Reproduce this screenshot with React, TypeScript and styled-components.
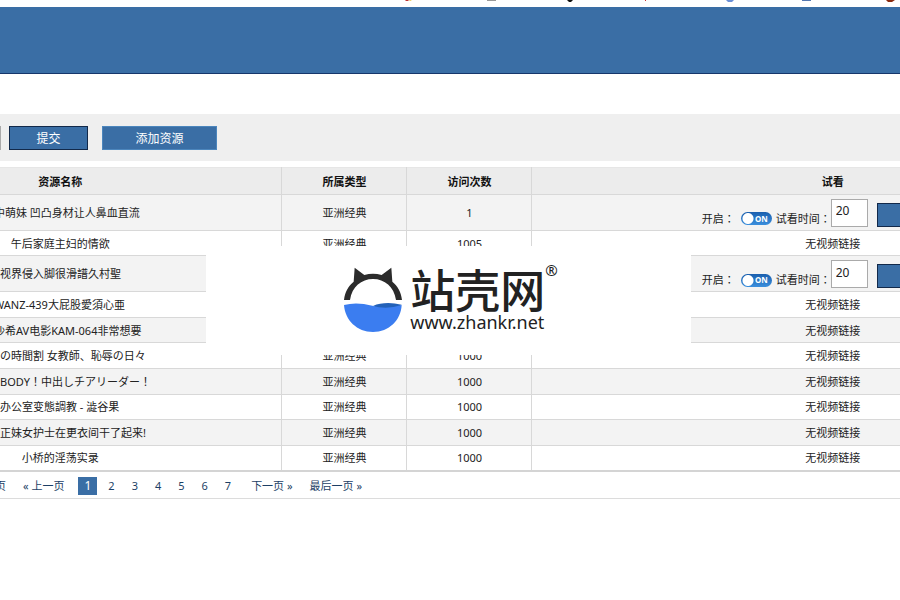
import React from "react";
import styled, { createGlobalStyle } from "styled-components";

const GlobalStyle = createGlobalStyle`
  *, *::before, *::after { box-sizing: border-box; }
  body {
    margin: 0;
    background: #fff;
    color: #222;
    font: 11px/16px "Noto Sans", "Noto Sans CJK SC", sans-serif;
  }
  input, button { font-family: inherit; }
`;

const BLUE = "#3a6ea5";

const Page = styled.div`
  overflow: hidden;
`;

const IconStrip = styled.svg`
  display: block;
  height: 7px;
`;

const Banner = styled.header`
  height: 67px;
  background: ${BLUE};
  border-bottom: 1px solid #16366b;
  margin-bottom: 40px;
`;

const Content = styled.main`
  position: relative;
  margin-left: -160px;
  width: calc(100% + 392px);
`;

const Toolbar = styled.form`
  display: flex;
  align-items: center;
  height: 47px;
  margin-bottom: 6px;
  background: #efefef;
`;

const SearchInput = styled.input`
  width: 161px;
  height: 24px;
  margin-right: 8px;
  background: #fff;
  border: 1px solid #aaa;
`;

const Button = styled.button<{ $wide?: boolean; $outlined?: boolean }>`
  flex: none;
  width: ${(p) => (p.$wide ? 115 : 79)}px;
  height: 24px;
  padding: 2px 0 0;
  color: #fff;
  font-size: 12px;
  line-height: 16px;
  background: ${BLUE};
  border: 1px solid ${(p) => (p.$outlined ? "#12294a" : "#4c86bd")};
  & + & { margin-left: 14px; }
`;

const Table = styled.table`
  width: 100%;
  height: 305px;
  table-layout: fixed;
  border-collapse: collapse;
  border-top: 1px solid #e6e6e6;
  border-bottom: 2px solid #d4d4d4;
`;

const NameCol = styled.col`
  width: 441px;
`;

const DataCol = styled.col`
  width: 125px;
`;

const HeadCell = styled.th`
  height: 27px;
  padding: 2px 0 0;
  color: #111;
  font-weight: 600;
  background: #ececec;
  border-bottom: 1px solid #d8d8d8;
  & + & { border-left: 1px solid #d8d8d8; padding-left: 2px; }
`;

const Row = styled.tr<{ $tall?: boolean }>`
  height: ${(p) => (p.$tall ? 35 : 25)}px;
  &:nth-child(odd) { background: #f3f3f3; }
`;

const Cell = styled.td`
  padding: 1px 0 0;
  text-align: center;
  white-space: nowrap;
  border-bottom: 1px solid #d8d8d8;
  & + & { border-left: 1px solid #d8d8d8; padding-left: 2px; }
`;

type NameAlign = "center" | "edge" | "cut";

const NameCell = styled(Cell)<{ $align: NameAlign }>`
  text-align: ${(p) => (p.$align === "center" ? "center" : "left")};
  padding-left: ${(p) => ({ center: 0, edge: 160, cut: 154 })[p.$align]}px;
  &:lang(ja) { font-family: "Noto Sans", "Noto Sans CJK JP", sans-serif; }
`;

const Preview = styled.div`
  display: flex;
  justify-content: center;
  align-items: flex-end;
  height: 28px;
  padding-right: 8px;
  font-family: "Noto Sans", "Noto Sans CJK TC", sans-serif;
`;

const Switch = styled.label`
  display: flex;
  align-items: center;
  height: 16px;
  margin-right: 4px;
`;

const SwitchInput = styled.input`
  appearance: none;
  margin: 0;
  width: 0;
  height: 0;
`;

const Track = styled.span`
  display: flex;
  align-items: center;
  justify-content: flex-end;
  width: 31px;
  height: 13px;
  margin-left: 6px;
  padding-right: 4px;
  color: #fff;
  font-size: 8px;
  font-weight: 700;
  line-height: 12px;
  border-radius: 7px;
  background: radial-gradient(circle at 7px 50%, #fff 5px, transparent 6px),
    linear-gradient(#1a5fae, #3b8fdd);
`;

const Time = styled.label`
  display: flex;
  align-items: flex-end;
`;

const TimeInput = styled.input`
  width: 37px;
  height: 28px;
  margin-right: 9px;
  padding: 0 4px 4px;
  color: #222;
  font-size: 12px;
  background: #fff;
  border: 1px solid #aaa;
`;

const Pagination = styled.nav`
  display: flex;
  align-items: center;
  gap: 5px;
  height: 27px;
  padding: 1px 0 0 149px;
  border-bottom: 1px solid #dcdcdc;
`;

const PageLink = styled.a<{ $current?: boolean }>`
  padding: 1px 6px;
  color: ${(p) => (p.$current ? "#fff" : "#1c3f66")};
  background: ${(p) => (p.$current ? BLUE : "transparent")};
  font-size: ${(p) => (p.$current ? 12 : 11)}px;
  text-decoration: none;
  white-space: nowrap;
`;

const PageSteps = styled.span`
  display: flex;
  gap: 5px;
  padding: 0 3px;
`;

const Watermark = styled.aside`
  position: absolute;
  top: 132px;
  left: 366px;
  display: flex;
  justify-content: center;
  width: 485px;
  height: 109px;
  padding: 20px 0 0 4px;
  background: #fff;
  color: #222;
`;

const LogoMark = styled.svg`
  width: 60px;
  height: 68px;
  margin-right: 7px;
`;

const LogoText = styled.div`
  display: flex;
  flex-direction: column;
`;

const LogoName = styled.div`
  font: 500 45px/46px "Noto Sans CJK SC", sans-serif;
`;

const LogoUrl = styled.div`
  font-size: 18px;
  line-height: 20px;
`;

const Registered = styled.sup`
  font-size: 15px;
  line-height: 8px;
  vertical-align: top;
`;

type Resource = { name: string; align: NameAlign; visits: string; preview?: boolean; lang?: string };

const resources: Resource[] = [
  { name: "中萌妹 凹凸身材让人鼻血直流", align: "cut", visits: "1", preview: true },
  { name: "午后家庭主妇的情欲", align: "center", visits: "1005" },
  { name: "视界侵入脚很滑譜久村聖", align: "edge", visits: "1000", preview: true },
  { name: "WANZ-439大屁股愛須心亜", align: "cut", visits: "1000" },
  { name: "沙希AV电影KAM-064非常想要", align: "cut", visits: "1000" },
  { name: "の時間割 女教師、恥辱の日々", align: "edge", visits: "1000", lang: "ja" },
  { name: "BODY！中出しチアリーダー！", align: "edge", visits: "1000", lang: "ja" },
  { name: "办公室变態調教 - 澁谷果", align: "edge", visits: "1000" },
  { name: "正妹女护士在更衣间干了起来!", align: "edge", visits: "1000" },
  { name: "小桥的淫荡实录", align: "center", visits: "1000" },
];

const pages = ["1", "2", "3", "4", "5", "6", "7"];

function PreviewControls() {
  return (
    <Preview>
      <Switch>
        开启：
        <SwitchInput type="checkbox" defaultChecked />
        <Track>ON</Track>
      </Switch>
      <Time>
        试看时间：
        <TimeInput type="text" defaultValue="20" />
      </Time>
      <Button type="button" $outlined aria-label="提交" />
    </Preview>
  );
}

function Logo() {
  return (
    <Watermark>
      <LogoMark viewBox="40 48 180 204" aria-hidden="true">
        <path
          d="M43 150C46 125 56 108 72 95L75 53L104 75Q130 67 156 75L185 53L188 95C204 108 214 125 217 150H199C193 110 165 87 130 87C95 87 67 110 61 150Z"
          fill="#2b2b2b"
        />
        <path d="M130 168Q165 153 216 164L200 176H145Z" fill="#2361b8" />
        <path d="M43 165Q80 155 128 167Q170 180 216 165C214 210 178 246 130 246C82 246 46 210 43 165Z" fill="#3b7df0" />
      </LogoMark>
      <LogoText>
        <LogoName>站壳网</LogoName>
        <LogoUrl>www.zhankr.net</LogoUrl>
      </LogoText>
      <Registered>®</Registered>
    </Watermark>
  );
}

export default function App() {
  return (
    <Page>
      <GlobalStyle />
      <IconStrip width="900" height="7" aria-hidden="true">
        <path d="M405 0h4l-1 1h-2z" fill="#b33" />
        <path d="M409 0h3l-2 1z" fill="#e8c040" />
        <path d="M487 0h9v1h-9z" fill="#999" />
        <path d="M567 0h6l-2 2h-2z" fill="#111" />
        <path d="M645 0h1v1h-1z" fill="#c33" />
        <path d="M726 0h8l-2 2h-4z" fill="#6b8fd6" />
        <path d="M802 0h9v1h-9z" fill="#5577b0" />
        <path d="M886 0h9l-3 2h-4z" fill="#8a2a10" />
      </IconStrip>
      <Banner />
      <Content>
        <Toolbar>
          <SearchInput type="text" aria-label="搜索" />
          <Button type="button" $outlined>提交</Button>
          <Button type="button" $wide>添加资源</Button>
        </Toolbar>
        <Table>
          <colgroup>
            <NameCol />
            <DataCol />
            <DataCol />
            <col />
          </colgroup>
          <thead>
            <tr>
              <HeadCell>资源名称</HeadCell>
              <HeadCell>所属类型</HeadCell>
              <HeadCell>访问次数</HeadCell>
              <HeadCell>试看</HeadCell>
            </tr>
          </thead>
          <tbody>
            {resources.map((r) => (
              <Row key={r.name} $tall={r.preview}>
                <NameCell $align={r.align} lang={r.lang}>{r.name}</NameCell>
                <Cell>亚洲经典</Cell>
                <Cell>{r.visits}</Cell>
                <Cell>{r.preview ? <PreviewControls /> : "无视频链接"}</Cell>
              </Row>
            ))}
          </tbody>
        </Table>
        <Pagination aria-label="分页">
          <PageLink href="#">页</PageLink>
          <PageLink href="#">« 上一页</PageLink>
          <PageSteps>
            {pages.map((p) => (
              <PageLink key={p} href="#" $current={p === "1"}>{p}</PageLink>
            ))}
          </PageSteps>
          <PageLink href="#">下一页 »</PageLink>
          <PageLink href="#">最后一页 »</PageLink>
        </Pagination>
        <Logo />
      </Content>
    </Page>
  );
}
